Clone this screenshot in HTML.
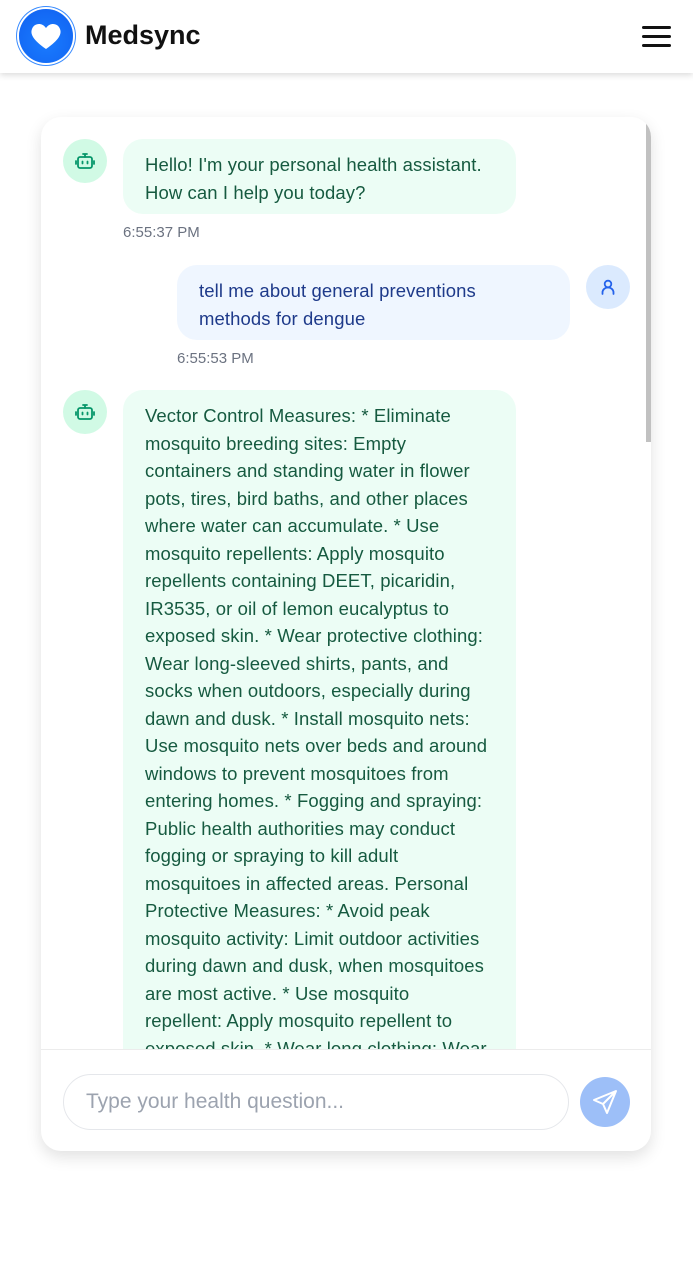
<!DOCTYPE html>
<html><head><meta charset="utf-8"><style>
*{box-sizing:border-box;margin:0;padding:0}
body{width:693px;height:1279px;background:#fff;font-family:"Liberation Sans",sans-serif;position:relative;overflow:hidden}
.hdr{position:absolute;left:0;top:0;width:693px;height:73px;background:#fff;box-shadow:0 2px 6px rgba(0,0,0,.15);z-index:5}
.logo{position:absolute;left:19px;top:9px;width:54px;height:54px;border-radius:50%;background:radial-gradient(circle at 50% 60%,#1a7cff,#1060f0);box-shadow:0 0 0 2px #fff,0 0 0 3px #3a8cff}
.brand{position:absolute;left:85px;top:20px;font-size:27px;font-weight:bold;color:#111}
.ham{position:absolute;left:642px;top:26px;width:29px}
.ham i{display:block;height:3px;background:#111;margin-bottom:6px;border-radius:2px}
.card{position:absolute;left:41px;top:117px;width:610px;height:1034px;border-radius:20px;background:#fff;box-shadow:0 6px 16px rgba(0,0,0,.12);overflow:hidden}
.msgs{position:absolute;left:0;top:0;width:610px;height:933px;overflow:hidden;border-bottom:1px solid #ececec}
.sb{position:absolute;right:0;top:0;width:5px;height:325px;background:#c1c1c1}
.av{position:absolute;width:44px;height:44px;border-radius:50%}
.bot{background:#d1fae5}.usr{background:#dbeafe}
.b{position:absolute;border-radius:20px;padding:12px 22px 8px;font-size:18.5px;line-height:27.5px;white-space:nowrap;letter-spacing:.1px}
.bb{background:#ecfdf5;color:#165a40;left:82px;width:393px}
.ub{background:#eff6ff;color:#1e3a8a;left:136px;width:393px}
.ts{position:absolute;font-size:15px;color:#6b7280}
.inp{position:absolute;left:22px;top:957px;width:506px;height:56px;border:1px solid #e5e7eb;border-radius:28px;font-size:21px;color:#9ca3af;padding:15px 22px}
.send{position:absolute;left:539px;top:960px;width:50px;height:50px;border-radius:50%;background:#9dbff8}
</style></head><body>
<div class="hdr">
<div class="logo"><svg width="54" height="54" viewBox="0 0 54 54"><path d="M27 40 C14 31 11 25 13 20 C15 14 23 13 27 19 C31 13 39 14 41 20 C43 25 40 31 27 40Z" fill="#fff"/></svg></div>
<div class="brand">Medsync</div>
<div class="ham"><i></i><i></i><i></i></div>
</div>
<div class="card">
<div class="msgs">
<div class="sb"></div>
<div class="av bot" style="left:22px;top:22px"><svg width="44" height="44" viewBox="0 0 44 44" fill="none" stroke="#059669" stroke-width="1.8" stroke-linecap="round"><rect x="15" y="18" width="14" height="11" rx="2"/><path d="M22 18v-3M20 15h4M13 22v3M31 22v3M19.5 22.5v2M24.5 22.5v2"/></svg></div>
<div class="b bb" style="top:22px">Hello! I'm your personal health assistant.<br>How can I help you today?</div>
<div class="ts" style="left:82px;top:107px">6:55:37 PM</div>
<div class="av usr" style="left:545px;top:148px"><svg width="44" height="44" viewBox="0 0 44 44" fill="none" stroke="#2563eb" stroke-width="1.8" stroke-linecap="round"><circle cx="22" cy="19" r="3.3"/><path d="M16.5 29v-1.5a5.5 5 0 0 1 11 0V29"/></svg></div>
<div class="b ub" style="top:148px">tell me about general preventions<br>methods for dengue</div>
<div class="ts" style="left:136px;top:233px">6:55:53 PM</div>
<div class="av bot" style="left:22px;top:273px"><svg width="44" height="44" viewBox="0 0 44 44" fill="none" stroke="#059669" stroke-width="1.8" stroke-linecap="round"><rect x="15" y="18" width="14" height="11" rx="2"/><path d="M22 18v-3M20 15h4M13 22v3M31 22v3M19.5 22.5v2M24.5 22.5v2"/></svg></div>
<div class="b bb" style="top:273px">Vector Control Measures: * Eliminate<br>mosquito breeding sites: Empty<br>containers and standing water in flower<br>pots, tires, bird baths, and other places<br>where water can accumulate. * Use<br>mosquito repellents: Apply mosquito<br>repellents containing DEET, picaridin,<br>IR3535, or oil of lemon eucalyptus to<br>exposed skin. * Wear protective clothing:<br>Wear long-sleeved shirts, pants, and<br>socks when outdoors, especially during<br>dawn and dusk. * Install mosquito nets:<br>Use mosquito nets over beds and around<br>windows to prevent mosquitoes from<br>entering homes. * Fogging and spraying:<br>Public health authorities may conduct<br>fogging or spraying to kill adult<br>mosquitoes in affected areas. Personal<br>Protective Measures: * Avoid peak<br>mosquito activity: Limit outdoor activities<br>during dawn and dusk, when mosquitoes<br>are most active. * Use mosquito<br>repellent: Apply mosquito repellent to<br>exposed skin. * Wear long clothing: Wear<br>long sleeves and pants.</div>
</div>
<div class="inp">Type your health question...</div>
<div class="send"><svg width="50" height="50" viewBox="0 0 50 50" fill="none" stroke="#fff" stroke-width="2" stroke-linejoin="round"><path d="M36 14 L14 23 L23 27 L27 36 Z M36 14 L23 27"/></svg></div>
</div>
</body></html>
